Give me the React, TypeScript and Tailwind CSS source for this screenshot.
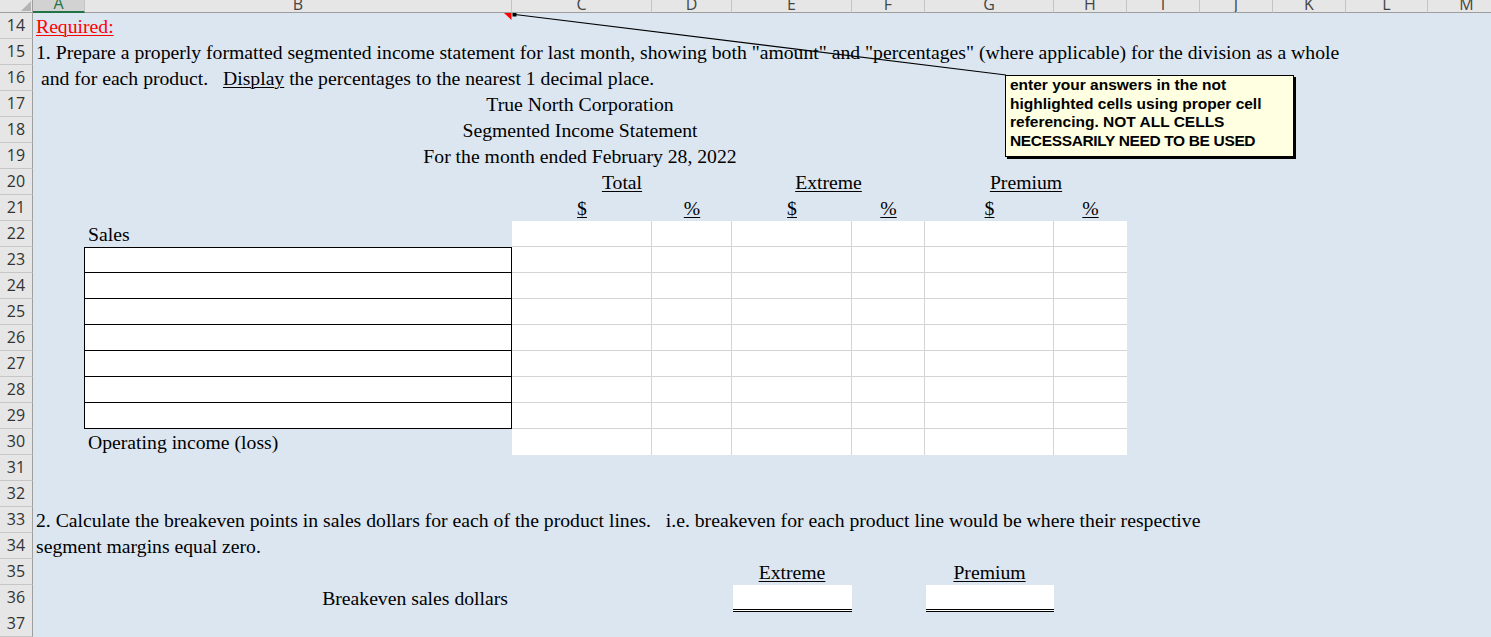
import React from "react";

const G =
  "grid h-[26px] grid-cols-[33px_52px_427px_140px_80px_120px_73px_129px_73px_73px_73px_73px_82px_78px]";

const COLSTART = ["", "", "", "", "col-start-4", "col-start-5", "col-start-6", "col-start-7", "col-start-8", "col-start-9"];

function Row({ n, children }: { n: number; children?: React.ReactNode }) {
  return (
    <div className={G}>
      <div className="col-start-1 row-start-1 border-r border-b border-r-[#9e9e9e] border-b-[#c6c6c6] bg-[#e6e6e6] text-center font-['Open_Sans'] text-[16px] leading-[25px] text-[#333]">
        {n}
      </div>
      {children}
    </div>
  );
}

function WhiteCells({ last }: { last?: boolean }) {
  return (
    <>
      {[4, 5, 6, 7, 8, 9].map((c) => (
        <div
          key={c}
          className={
            COLSTART[c] +
            " row-start-1 bg-white border-[#d4d4d4]" +
            (c < 9 ? " border-r" : "") +
            (last ? "" : " border-b")
          }
        />
      ))}
    </>
  );
}

function BoxCell({ first }: { first?: boolean }) {
  return (
    <div
      className={
        "col-start-3 row-start-1 -ml-px bg-white border-l border-r border-b border-black" +
        (first ? " border-t" : "")
      }
    />
  );
}

const LETTERS = ["A", "B", "C", "D", "E", "F", "G", "H", "I", "J", "K", "L", "M"];

export default function App() {
  return (
    <div className="relative h-[637px] w-[1491px] overflow-hidden bg-[#dce6f1] font-['Liberation_Serif'] text-[19.7px] leading-[26px] text-black">
      {/* column header */}
      <div className="grid h-[13px] grid-cols-[33px_52px_427px_140px_80px_120px_73px_129px_73px_73px_73px_73px_82px_78px]">
        <div className="relative border-r border-b border-[#9e9e9e] bg-[#e6e6e6]">
          <svg className="absolute left-0 top-0" width="33" height="12">
            <polygon points="31,1 31,11 21,11" fill="#b4b4b4" />
          </svg>
        </div>
        {LETTERS.map((l) =>
          l === "A" ? (
            <div
              key={l}
              className="flex items-end justify-center overflow-hidden border-r border-b-2 border-r-[#c4c4c4] border-b-[#217346] bg-[#d2d2d2] font-['Open_Sans'] text-[16px] leading-[16px] text-[#217346]"
            >
              {l}
            </div>
          ) : (
            <div
              key={l}
              className="flex items-end justify-center overflow-hidden border-r border-b border-r-[#c4c4c4] border-b-[#9e9e9e] bg-[#e6e6e6] font-['Open_Sans'] text-[16px] leading-[16px] text-[#444]"
            >
              {l}
            </div>
          )
        )}
      </div>

      <Row n={14}>
        <div className="col-start-2 col-end-15 row-start-1 whitespace-pre pl-[3px] text-[#ff0000]">
          <span className="underline decoration-1 underline-offset-[2px]">Required:</span>
        </div>
      </Row>
      <Row n={15}>
        <div className="col-start-2 col-end-15 row-start-1 whitespace-pre pl-[3px]">
          1. Prepare a properly formatted segmented income statement for last month, showing both "amount" and "percentages" (where applicable) for the division as a whole
        </div>
      </Row>
      <Row n={16}>
        <div className="col-start-2 col-end-15 row-start-1 whitespace-pre pl-[3px]">
          {" and for each product.   "}
          <span className="underline decoration-1 underline-offset-[2px]">Display</span>
          {" the percentages to the nearest 1 decimal place."}
        </div>
      </Row>
      <Row n={17}>
        <div className="col-start-2 col-end-10 row-start-1 whitespace-pre text-center">True North Corporation</div>
      </Row>
      <Row n={18}>
        <div className="col-start-2 col-end-10 row-start-1 whitespace-pre text-center">Segmented Income Statement</div>
      </Row>
      <Row n={19}>
        <div className="col-start-2 col-end-10 row-start-1 whitespace-pre text-center">For the month ended February 28, 2022</div>
      </Row>
      <Row n={20}>
        <div className="col-start-4 col-end-6 row-start-1 text-center">
          <span className="underline decoration-1 underline-offset-[2px]">Total</span>
        </div>
        <div className="col-start-6 col-end-8 row-start-1 text-center">
          <span className="underline decoration-1 underline-offset-[2px]">Extreme</span>
        </div>
        <div className="col-start-8 col-end-10 row-start-1 text-center">
          <span className="underline decoration-1 underline-offset-[2px]">Premium</span>
        </div>
      </Row>
      <Row n={21}>
        {[4, 5, 6, 7, 8, 9].map((c) => (
          <div key={c} className={COLSTART[c] + " row-start-1 text-center"}>
            <span className="underline decoration-1 underline-offset-[2px]">{c % 2 === 0 ? "$" : "%"}</span>
          </div>
        ))}
      </Row>
      <Row n={22}>
        <div className="col-start-3 row-start-1 whitespace-pre pl-[3px]">Sales</div>
        <WhiteCells />
      </Row>
      {[23, 24, 25, 26, 27, 28, 29].map((n) => (
        <Row key={n} n={n}>
          <BoxCell first={n === 23} />
          <WhiteCells />
        </Row>
      ))}
      <Row n={30}>
        <div className="col-start-3 row-start-1 whitespace-pre pl-[3px]">Operating income (loss)</div>
        <WhiteCells last />
      </Row>
      <Row n={31} />
      <Row n={32} />
      <Row n={33}>
        <div className="col-start-2 col-end-15 row-start-1 whitespace-pre pl-[3px]">
          2. Calculate the breakeven points in sales dollars for each of the product lines.   i.e. breakeven for each product line would be where their respective
        </div>
      </Row>
      <Row n={34}>
        <div className="col-start-2 col-end-15 row-start-1 whitespace-pre pl-[3px]">segment margins equal zero.</div>
      </Row>
      <Row n={35}>
        <div className="col-start-6 row-start-1 text-center">
          <span className="underline decoration-1 underline-offset-[2px]">Extreme</span>
        </div>
        <div className="col-start-8 row-start-1 text-center">
          <span className="underline decoration-1 underline-offset-[2px]">Premium</span>
        </div>
      </Row>
      <Row n={36}>
        <div className="col-start-3 row-start-1 whitespace-pre pr-[4px] text-right">Breakeven sales dollars</div>
        <div className="col-start-6 row-start-1 ml-px h-[27px] border-b-[3px] border-double border-black bg-white" />
        <div className="col-start-8 row-start-1 ml-px h-[27px] border-b-[3px] border-double border-black bg-white" />
      </Row>
      <Row n={37} />

      {/* comment connector */}
      <svg className="pointer-events-none absolute left-0 top-0" width="1491" height="637">
        <polygon points="504,13 511.5,13 511.5,20" fill="#ff0000" />
        <line x1="515" y1="14.5" x2="1006" y2="75" stroke="#000" strokeWidth="1.2" />
        <rect x="512.5" y="13" width="4" height="3.5" fill="#000" />
      </svg>

      {/* comment box */}
      <div className="absolute left-[1005px] top-[75px] h-[82px] w-[289px] border border-black bg-[#ffffe1] pl-[4px] font-['Liberation_Sans'] text-[15.5px] font-bold leading-[18.7px] text-black shadow-[2px_2px_0_0_#000]">
        enter your answers in the not
        <br />
        highlighted cells using proper cell
        <br />
        referencing. NOT ALL CELLS
        <br />
        <span className="tracking-[-0.35px]">NECESSARILY NEED TO BE USED</span>
      </div>
    </div>
  );
}
